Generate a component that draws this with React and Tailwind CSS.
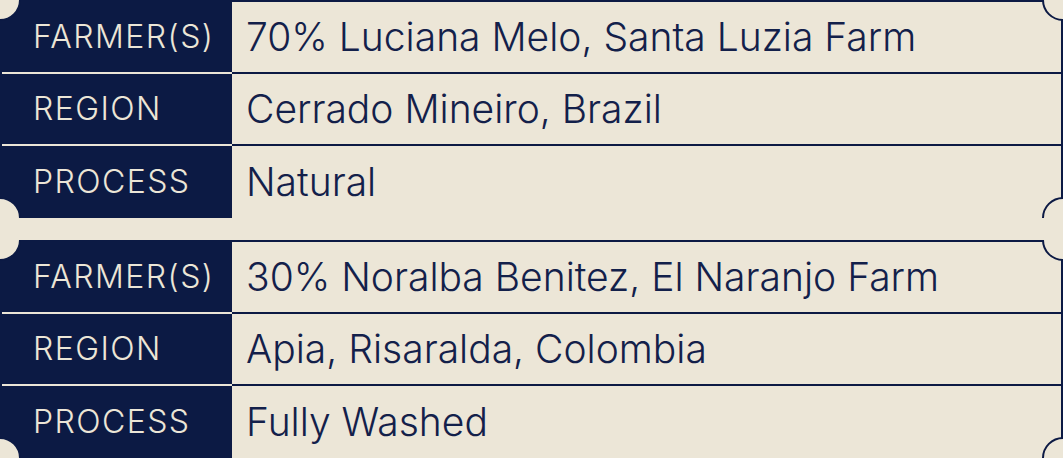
const tables = [
  [
    ['FARMER(S)', '70% Luciana Melo, Santa Luzia Farm'],
    ['REGION', 'Cerrado Mineiro, Brazil'],
    ['PROCESS', 'Natural'],
  ],
  [
    ['FARMER(S)', '30% Noralba Benitez, El Naranjo Farm'],
    ['REGION', 'Apia, Risaralda, Colombia'],
    ['PROCESS', 'Fully Washed'],
  ],
];

function Notch({ className }) {
  return (
    <span
      className={`absolute h-[42px] w-[42px] rounded-full border-2 border-[#0c1a44] bg-[#ece6d7] ${className}`}
    />
  );
}

function Ticket({ rows }) {
  return (
    <div className="relative overflow-hidden">
      <div className="border-2 border-[#0c1a44]">
        {rows.map(([label, value], i) => (
          <div key={label} className="flex h-[72px]">
            <div
              className={`flex w-[230px] shrink-0 items-center bg-[#0c1a44] pl-[31px] text-[32px] font-light tracking-[0.045em] text-[#ece6d7] ${
                i < rows.length - 1 ? 'border-b-2 border-[#ece6d7]' : ''
              }`}
            >
              {label}
            </div>
            <div
              className={`flex flex-1 items-center pl-[14px] text-[39px] font-light text-[#13204a] ${
                i < rows.length - 1 ? 'border-b-2 border-[#0c1a44]' : ''
              }`}
            >
              {value}
            </div>
          </div>
        ))}
      </div>
      <Notch className="-left-[21px] -top-[21px]" />
      <Notch className="-right-[21px] -top-[21px]" />
      <Notch className="-bottom-[21px] -left-[21px]" />
      <Notch className="-bottom-[21px] -right-[21px]" />
    </div>
  );
}

export default function App() {
  return (
    <div
      className="flex h-[458px] w-[1063px] flex-col gap-[22px] overflow-hidden bg-[#ece6d7]"
      style={{ fontFamily: 'Inter, "Open Sans", sans-serif' }}
    >
      {tables.map((rows, i) => (
        <Ticket key={i} rows={rows} />
      ))}
    </div>
  );
}
